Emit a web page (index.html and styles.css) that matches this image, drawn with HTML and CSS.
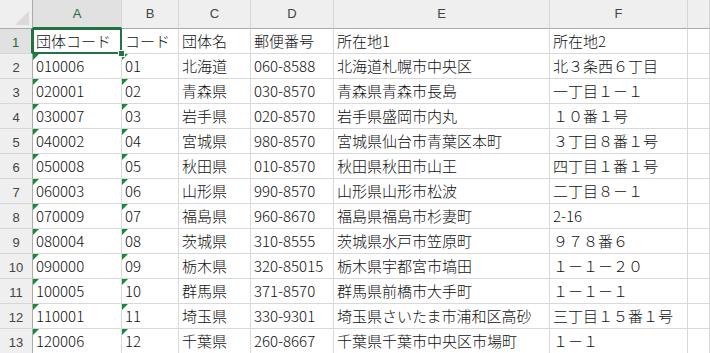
FILE: index.html
```html
<!DOCTYPE html>
<html lang="ja">
<head>
<meta charset="utf-8">
<title>Sheet</title>
<link rel="stylesheet" href="styles.css">
</head>
<body>
<div class="sheet">
  <div class="corner"><span class="tri"></span></div>
  <div class="ch sel">A</div>
  <div class="ch">B</div>
  <div class="ch">C</div>
  <div class="ch">D</div>
  <div class="ch">E</div>
  <div class="ch">F</div>
  <div class="ch"></div>

  <div class="rh sel">1</div>
  <div class="c">団体コード</div><div class="c">コード</div><div class="c">団体名</div><div class="c">郵便番号</div><div class="c">所在地1</div><div class="c">所在地2</div><div class="c"></div>

  <div class="rh">2</div>
  <div class="c t">010006</div><div class="c t">01</div><div class="c">北海道</div><div class="c">060-8588</div><div class="c">北海道札幌市中央区</div><div class="c">北３条西６丁目</div><div class="c"></div>

  <div class="rh">3</div>
  <div class="c t">020001</div><div class="c t">02</div><div class="c">青森県</div><div class="c">030-8570</div><div class="c">青森県青森市長島</div><div class="c">一丁目１－１</div><div class="c"></div>

  <div class="rh">4</div>
  <div class="c t">030007</div><div class="c t">03</div><div class="c">岩手県</div><div class="c">020-8570</div><div class="c">岩手県盛岡市内丸</div><div class="c">１０番１号</div><div class="c"></div>

  <div class="rh">5</div>
  <div class="c t">040002</div><div class="c t">04</div><div class="c">宮城県</div><div class="c">980-8570</div><div class="c">宮城県仙台市青葉区本町</div><div class="c">３丁目８番１号</div><div class="c"></div>

  <div class="rh">6</div>
  <div class="c t">050008</div><div class="c t">05</div><div class="c">秋田県</div><div class="c">010-8570</div><div class="c">秋田県秋田市山王</div><div class="c">四丁目１番１号</div><div class="c"></div>

  <div class="rh">7</div>
  <div class="c t">060003</div><div class="c t">06</div><div class="c">山形県</div><div class="c">990-8570</div><div class="c">山形県山形市松波</div><div class="c">二丁目８－１</div><div class="c"></div>

  <div class="rh">8</div>
  <div class="c t">070009</div><div class="c t">07</div><div class="c">福島県</div><div class="c">960-8670</div><div class="c">福島県福島市杉妻町</div><div class="c">2-16</div><div class="c"></div>

  <div class="rh">9</div>
  <div class="c t">080004</div><div class="c t">08</div><div class="c">茨城県</div><div class="c">310-8555</div><div class="c">茨城県水戸市笠原町</div><div class="c">９７８番６</div><div class="c"></div>

  <div class="rh">10</div>
  <div class="c t">090000</div><div class="c t">09</div><div class="c">栃木県</div><div class="c">320-85015</div><div class="c">栃木県宇都宮市塙田</div><div class="c">１－１－２０</div><div class="c"></div>

  <div class="rh">11</div>
  <div class="c t">100005</div><div class="c t">10</div><div class="c">群馬県</div><div class="c">371-8570</div><div class="c">群馬県前橋市大手町</div><div class="c">１－１－１</div><div class="c"></div>

  <div class="rh">12</div>
  <div class="c t">110001</div><div class="c t">11</div><div class="c">埼玉県</div><div class="c">330-9301</div><div class="c">埼玉県さいたま市浦和区高砂</div><div class="c">三丁目１５番１号</div><div class="c"></div>

  <div class="rh">13</div>
  <div class="c t">120006</div><div class="c t">12</div><div class="c">千葉県</div><div class="c">260-8667</div><div class="c">千葉県千葉市中央区市場町</div><div class="c">１－１</div><div class="c"></div>

  <div class="selbox"><span class="handle"></span></div>
</div>
</body>
</html>
```

FILE: styles.css
```css
* { box-sizing: border-box; }
html, body {
  margin: 0;
  padding: 0;
  background: #ffffff;
  overflow: hidden;
}
.sheet {
  position: relative;
  display: grid;
  grid-template-columns: 33px 89px 57px 72px 83px 216px 138px 22px;
  grid-template-rows: 29px repeat(13, 25px);
  width: 710px;
  font-family: "Noto Sans CJK JP", "Liberation Sans", sans-serif;
}
.corner {
  position: relative;
  background: #efefef;
  border-right: 1px solid #ababab;
  border-bottom: 1px solid #ababab;
}
.tri {
  position: absolute;
  right: 3px;
  bottom: 3px;
  width: 0;
  height: 0;
  border-left: 14px solid transparent;
  border-bottom: 14px solid #dadada;
}
.ch {
  background: #efefef;
  border-right: 1px solid #d6d6d6;
  border-bottom: 1px solid #ababab;
  display: flex;
  align-items: center;
  justify-content: center;
  font-family: "Liberation Sans", "Noto Sans CJK JP", sans-serif;
  font-size: 13px;
  color: #444444;
  padding-bottom: 1px;
}
.ch.sel {
  background: #e1e1e1;
  color: #1e6b41;
  border-bottom: 2px solid #217346;
}
.rh {
  background: #efefef;
  border-right: 1px solid #ababab;
  border-bottom: 1px solid #d6d6d6;
  display: flex;
  align-items: center;
  justify-content: center;
  font-family: "Liberation Sans", "Noto Sans CJK JP", sans-serif;
  font-size: 13px;
  color: #444444;
  padding-top: 2px;
}
.rh.sel {
  background: #e1e1e1;
  color: #1e6b41;
  border-right: 2px solid #217346;
}
.c {
  position: relative;
  border-right: 1px solid #d9d9d9;
  border-bottom: 1px solid #d9d9d9;
  display: flex;
  align-items: flex-end;
  padding: 0 2px 2px 3px;
  font-size: 15px;
  font-weight: 300;
  line-height: 20px;
  color: #111111;
  white-space: nowrap;
  overflow: visible;
}
.c.t::before {
  content: "";
  position: absolute;
  left: 0;
  top: 0;
  width: 0;
  height: 0;
  border-top: 6px solid #178a3a;
  border-right: 6px solid transparent;
}
.selbox {
  position: absolute;
  left: 32px;
  top: 28px;
  width: 90px;
  height: 26px;
  border: 2px solid #217346;
  pointer-events: none;
}
.handle {
  position: absolute;
  right: -5px;
  bottom: -5px;
  width: 7px;
  height: 7px;
  background: #217346;
  border: 1px solid #ffffff;
}
```
